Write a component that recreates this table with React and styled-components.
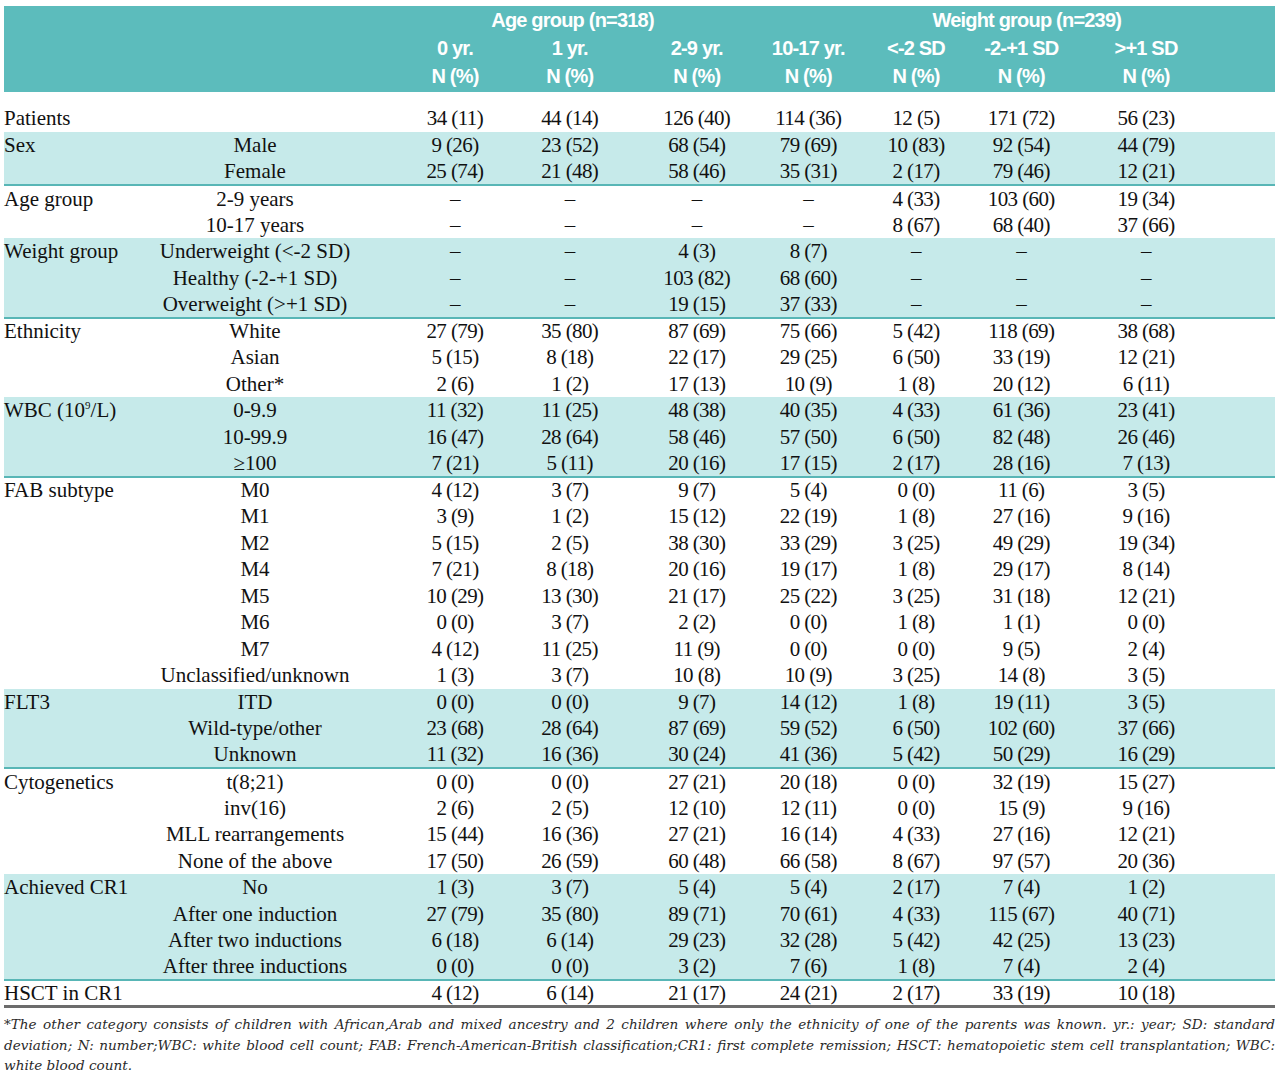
import React from 'react';
import styled, { createGlobalStyle } from 'styled-components';

const GlobalStyle = createGlobalStyle`
  html, body {
    margin: 0;
    padding: 0;
    background: #ffffff;
  }
`;

const Page = styled.div`
  width: 1271px;
  padding: 6px 5px 0 4px;
  font-family: "Liberation Serif", "Times New Roman", serif;
  color: #111;
`;

const Table = styled.table`
  width: 1271px;
  border-collapse: collapse;
  table-layout: fixed;
  border-bottom: 3px solid #6c6c6c;
`;

const Head = styled.thead`
  background: #5cbcbc;
`;

const HeadRow = styled.tr`
  height: ${(p) => p.$h}px;
`;

const HeadCell = styled.th`
  padding: 0;
  padding-left: ${(p) => Math.max(0, (p.$shift || 0) * 2)}px;
  padding-right: ${(p) => Math.max(0, -(p.$shift || 0) * 2)}px;
  font-family: "Liberation Sans", Arial, sans-serif;
  font-weight: 700;
  font-size: 20px;
  letter-spacing: -0.8px;
  color: #ffffff;
  text-align: center;
  vertical-align: middle;
  white-space: nowrap;
`;

const Group = styled.tbody`
  background: ${(p) => (p.$shaded ? '#c6eaea' : '#ffffff')};
  border-bottom: ${(p) => (p.$shaded ? '2px solid #58b6b6' : 'none')};
`;

const Row = styled.tr`
  height: ${(p) => (p.$first ? 40 : 26.5)}px;
`;

const LabelCell = styled.td`
  padding: 0 0 ${(p) => (p.$first ? 2 : 0)}px 0;
  font-size: 21px;
  line-height: 24px;
  text-align: left;
  white-space: nowrap;
  vertical-align: ${(p) => (p.$first ? 'bottom' : 'middle')};

  sup {
    position: relative;
    top: -8px;
    font-size: 11px;
    vertical-align: baseline;
    line-height: 0;
  }
`;

const SubCell = styled.td`
  padding: 0 39px 0 0;
  font-size: 21px;
  line-height: 24px;
  text-align: center;
  white-space: nowrap;
  vertical-align: middle;
`;

const NumCell = styled.td`
  padding: 0 0 ${(p) => (p.$first ? 2 : 0)}px 0;
  padding-left: ${(p) => Math.max(0, (p.$shift || 0) * 2)}px;
  padding-right: ${(p) => Math.max(0, -(p.$shift || 0) * 2)}px;
  font-size: 21px;
  line-height: 24px;
  letter-spacing: -0.6px;
  text-align: center;
  white-space: nowrap;
  vertical-align: ${(p) => (p.$first ? 'bottom' : 'middle')};
`;

const Footnote = styled.div`
  margin-top: 6px;
  font-family: "DejaVu Serif", serif;
  font-style: italic;
  font-size: 13.6px;
  line-height: 20.5px;
  color: #2a2a2a;
`;

const FootLine = styled.div`
  text-align: justify;
  text-align-last: ${(p) => (p.$last ? 'left' : 'justify')};
  white-space: nowrap;
`;

const widths = [146, 249, 112, 122.5, 120.5, 108.5, 105, 114.5, 128, 65];
const shifts = [0, -2.5, 3, 0, 1, -3.5, 0];

const cols = ['0 yr.', '1 yr.', '2-9 yr.', '10-17 yr.', '<-2 SD', '-2-+1 SD', '>+1 SD'];

const D = '–';

const groups = [
  {
    label: 'Patients',
    first: true,
    rows: [['', '34 (11)', '44 (14)', '126 (40)', '114 (36)', '12 (5)', '171 (72)', '56 (23)']],
  },
  {
    label: 'Sex',
    shaded: true,
    rows: [
      ['Male', '9 (26)', '23 (52)', '68 (54)', '79 (69)', '10 (83)', '92 (54)', '44 (79)'],
      ['Female', '25 (74)', '21 (48)', '58 (46)', '35 (31)', '2 (17)', '79 (46)', '12 (21)'],
    ],
  },
  {
    label: 'Age group',
    rows: [
      ['2-9 years', D, D, D, D, '4 (33)', '103 (60)', '19 (34)'],
      ['10-17 years', D, D, D, D, '8 (67)', '68 (40)', '37 (66)'],
    ],
  },
  {
    label: 'Weight group',
    shaded: true,
    rows: [
      ['Underweight (<-2 SD)', D, D, '4 (3)', '8 (7)', D, D, D],
      ['Healthy (-2-+1 SD)', D, D, '103 (82)', '68 (60)', D, D, D],
      ['Overweight (>+1 SD)', D, D, '19 (15)', '37 (33)', D, D, D],
    ],
  },
  {
    label: 'Ethnicity',
    rows: [
      ['White', '27 (79)', '35 (80)', '87 (69)', '75 (66)', '5 (42)', '118 (69)', '38 (68)'],
      ['Asian', '5 (15)', '8 (18)', '22 (17)', '29 (25)', '6 (50)', '33 (19)', '12 (21)'],
      ['Other*', '2 (6)', '1 (2)', '17 (13)', '10 (9)', '1 (8)', '20 (12)', '6 (11)'],
    ],
  },
  {
    label: 'WBC',
    shaded: true,
    rows: [
      ['0-9.9', '11 (32)', '11 (25)', '48 (38)', '40 (35)', '4 (33)', '61 (36)', '23 (41)'],
      ['10-99.9', '16 (47)', '28 (64)', '58 (46)', '57 (50)', '6 (50)', '82 (48)', '26 (46)'],
      ['≥100', '7 (21)', '5 (11)', '20 (16)', '17 (15)', '2 (17)', '28 (16)', '7 (13)'],
    ],
  },
  {
    label: 'FAB subtype',
    rows: [
      ['M0', '4 (12)', '3 (7)', '9 (7)', '5 (4)', '0 (0)', '11 (6)', '3 (5)'],
      ['M1', '3 (9)', '1 (2)', '15 (12)', '22 (19)', '1 (8)', '27 (16)', '9 (16)'],
      ['M2', '5 (15)', '2 (5)', '38 (30)', '33 (29)', '3 (25)', '49 (29)', '19 (34)'],
      ['M4', '7 (21)', '8 (18)', '20 (16)', '19 (17)', '1 (8)', '29 (17)', '8 (14)'],
      ['M5', '10 (29)', '13 (30)', '21 (17)', '25 (22)', '3 (25)', '31 (18)', '12 (21)'],
      ['M6', '0 (0)', '3 (7)', '2 (2)', '0 (0)', '1 (8)', '1 (1)', '0 (0)'],
      ['M7', '4 (12)', '11 (25)', '11 (9)', '0 (0)', '0 (0)', '9 (5)', '2 (4)'],
      ['Unclassified/unknown', '1 (3)', '3 (7)', '10 (8)', '10 (9)', '3 (25)', '14 (8)', '3 (5)'],
    ],
  },
  {
    label: 'FLT3',
    shaded: true,
    rows: [
      ['ITD', '0 (0)', '0 (0)', '9 (7)', '14 (12)', '1 (8)', '19 (11)', '3 (5)'],
      ['Wild-type/other', '23 (68)', '28 (64)', '87 (69)', '59 (52)', '6 (50)', '102 (60)', '37 (66)'],
      ['Unknown', '11 (32)', '16 (36)', '30 (24)', '41 (36)', '5 (42)', '50 (29)', '16 (29)'],
    ],
  },
  {
    label: 'Cytogenetics',
    rows: [
      ['t(8;21)', '0 (0)', '0 (0)', '27 (21)', '20 (18)', '0 (0)', '32 (19)', '15 (27)'],
      ['inv(16)', '2 (6)', '2 (5)', '12 (10)', '12 (11)', '0 (0)', '15 (9)', '9 (16)'],
      ['MLL rearrangements', '15 (44)', '16 (36)', '27 (21)', '16 (14)', '4 (33)', '27 (16)', '12 (21)'],
      ['None of the above', '17 (50)', '26 (59)', '60 (48)', '66 (58)', '8 (67)', '97 (57)', '20 (36)'],
    ],
  },
  {
    label: 'Achieved CR1',
    shaded: true,
    rows: [
      ['No', '1 (3)', '3 (7)', '5 (4)', '5 (4)', '2 (17)', '7 (4)', '1 (2)'],
      ['After one induction', '27 (79)', '35 (80)', '89 (71)', '70 (61)', '4 (33)', '115 (67)', '40 (71)'],
      ['After two inductions', '6 (18)', '6 (14)', '29 (23)', '32 (28)', '5 (42)', '42 (25)', '13 (23)'],
      ['After three inductions', '0 (0)', '0 (0)', '3 (2)', '7 (6)', '1 (8)', '7 (4)', '2 (4)'],
    ],
  },
  {
    label: 'HSCT in CR1',
    rows: [['', '4 (12)', '6 (14)', '21 (17)', '24 (21)', '2 (17)', '33 (19)', '10 (18)']],
  },
];

function GroupLabel({ label }) {
  if (label === 'WBC') {
    return (
      <>
        WBC (10<sup>9</sup>/L)
      </>
    );
  }
  return label;
}

function App() {
  return (
    <Page>
      <GlobalStyle />
      <Table>
        <colgroup>
          {widths.map((w, i) => (
            <col key={i} style={{ width: w }} />
          ))}
        </colgroup>
        <Head>
          <HeadRow $h={29}>
            <HeadCell colSpan={2} />
            <HeadCell colSpan={3} $shift={-4}>Age group (n=318)</HeadCell>
            <HeadCell />
            <HeadCell colSpan={3} $shift={-9.5}>Weight group (n=239)</HeadCell>
            <HeadCell />
          </HeadRow>
          <HeadRow $h={26}>
            <HeadCell colSpan={2} />
            {cols.map((c, i) => (
              <HeadCell key={c} $shift={shifts[i]}>{c}</HeadCell>
            ))}
            <HeadCell />
          </HeadRow>
          <HeadRow $h={31}>
            <HeadCell colSpan={2} />
            {cols.map((c, i) => (
              <HeadCell key={c} $shift={shifts[i]}>N (%)</HeadCell>
            ))}
            <HeadCell />
          </HeadRow>
        </Head>
        {groups.map((g) => (
          <Group key={g.label} $shaded={g.shaded}>
            {g.rows.map((r, ri) => (
              <Row key={ri} $first={g.first}>
                <LabelCell $first={g.first}>
                  {ri === 0 ? <GroupLabel label={g.label} /> : null}
                </LabelCell>
                <SubCell>{r[0]}</SubCell>
                {r.slice(1).map((v, ci) => (
                  <NumCell key={ci} $shift={shifts[ci]} $first={g.first}>
                    {v}
                  </NumCell>
                ))}
                <NumCell />
              </Row>
            ))}
          </Group>
        ))}
      </Table>
      <Footnote>
        <FootLine>
          *The other category consists of children with African,Arab and mixed ancestry and 2 children where only the ethnicity of one of the parents was known. yr.: year; SD: standard
        </FootLine>
        <FootLine>
          deviation; N: number;WBC: white blood cell count; FAB: French-American-British classification;CR1: first complete remission; HSCT: hematopoietic stem cell transplantation; WBC:
        </FootLine>
        <FootLine $last>white blood count.</FootLine>
      </Footnote>
    </Page>
  );
}

export default App;
